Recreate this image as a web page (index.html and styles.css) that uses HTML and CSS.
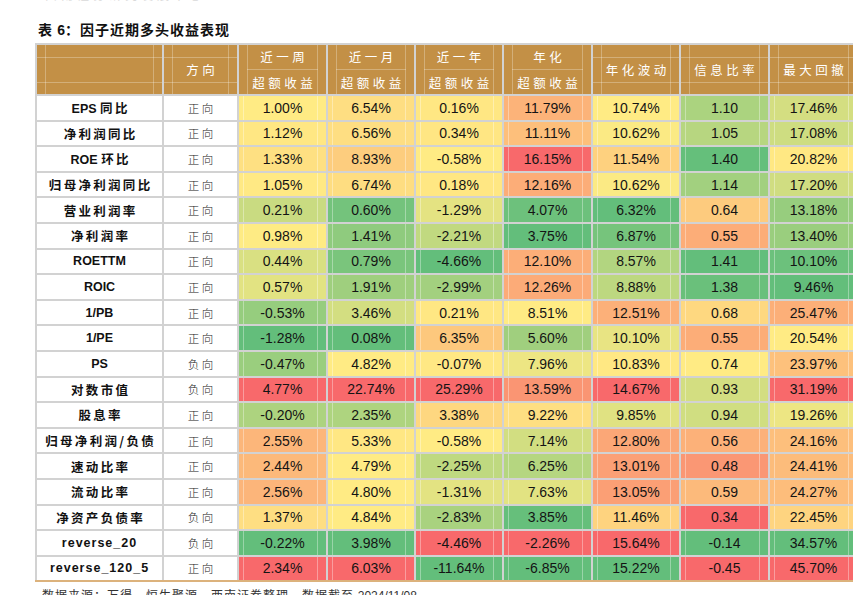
FILE: index.html
```html
<!DOCTYPE html>
<html lang="zh-CN">
<head>
<meta charset="utf-8">
<title>表6 因子近期多头收益表现</title>
<link rel="stylesheet" href="styles.css">
</head>
<body>
<div class="cut-top"><div class="cut-inner">西南证券研究发展中心</div></div>
<h1 class="title">表 <span class="lat">6</span>：因子近期多头收益表现</h1>
<div class="grid" id="grid">
  <div class="hd single blank"></div>
  <div class="hd single"><span>方向</span></div>
  <div class="hd double"><span>近一周</span><span>超额收益</span></div>
  <div class="hd double"><span>近一月</span><span>超额收益</span></div>
  <div class="hd double"><span>近一年</span><span>超额收益</span></div>
  <div class="hd double"><span>年化</span><span>超额收益</span></div>
  <div class="hd single"><span>年化波动</span></div>
  <div class="hd single"><span>信息比率</span></div>
  <div class="hd single"><span>最大回撤</span></div>

  <div class="nm"><span>EPS&nbsp;<span class="cn">同比</span></span></div><div class="dir">正向</div><div class="v">1.00%</div><div class="v">6.54%</div><div class="v">0.16%</div><div class="v">11.79%</div><div class="v">10.74%</div><div class="v">1.10</div><div class="v">17.46%</div>
  <div class="nm"><span class="cn">净利润同比</span></div><div class="dir">正向</div><div class="v">1.12%</div><div class="v">6.56%</div><div class="v">0.34%</div><div class="v">11.11%</div><div class="v">10.62%</div><div class="v">1.05</div><div class="v">17.08%</div>
  <div class="nm"><span>ROE&nbsp;<span class="cn">环比</span></span></div><div class="dir">正向</div><div class="v">1.33%</div><div class="v">8.93%</div><div class="v">-0.58%</div><div class="v">16.15%</div><div class="v">11.54%</div><div class="v">1.40</div><div class="v">20.82%</div>
  <div class="nm"><span class="cn">归母净利润同比</span></div><div class="dir">正向</div><div class="v">1.05%</div><div class="v">6.74%</div><div class="v">0.18%</div><div class="v">12.16%</div><div class="v">10.62%</div><div class="v">1.14</div><div class="v">17.20%</div>
  <div class="nm"><span class="cn">营业利润率</span></div><div class="dir">正向</div><div class="v">0.21%</div><div class="v">0.60%</div><div class="v">-1.29%</div><div class="v">4.07%</div><div class="v">6.32%</div><div class="v">0.64</div><div class="v">13.18%</div>
  <div class="nm"><span class="cn">净利润率</span></div><div class="dir">正向</div><div class="v">0.98%</div><div class="v">1.41%</div><div class="v">-2.21%</div><div class="v">3.75%</div><div class="v">6.87%</div><div class="v">0.55</div><div class="v">13.40%</div>
  <div class="nm">ROETTM</div><div class="dir">正向</div><div class="v">0.44%</div><div class="v">0.79%</div><div class="v">-4.66%</div><div class="v">12.10%</div><div class="v">8.57%</div><div class="v">1.41</div><div class="v">10.10%</div>
  <div class="nm">ROIC</div><div class="dir">正向</div><div class="v">0.57%</div><div class="v">1.91%</div><div class="v">-2.99%</div><div class="v">12.26%</div><div class="v">8.88%</div><div class="v">1.38</div><div class="v">9.46%</div>
  <div class="nm">1/PB</div><div class="dir">正向</div><div class="v">-0.53%</div><div class="v">3.46%</div><div class="v">0.21%</div><div class="v">8.51%</div><div class="v">12.51%</div><div class="v">0.68</div><div class="v">25.47%</div>
  <div class="nm">1/PE</div><div class="dir">正向</div><div class="v">-1.28%</div><div class="v">0.08%</div><div class="v">6.35%</div><div class="v">5.60%</div><div class="v">10.10%</div><div class="v">0.55</div><div class="v">20.54%</div>
  <div class="nm">PS</div><div class="dir">负向</div><div class="v">-0.47%</div><div class="v">4.82%</div><div class="v">-0.07%</div><div class="v">7.96%</div><div class="v">10.83%</div><div class="v">0.74</div><div class="v">23.97%</div>
  <div class="nm"><span class="cn">对数市值</span></div><div class="dir">负向</div><div class="v">4.77%</div><div class="v">22.74%</div><div class="v">25.29%</div><div class="v">13.59%</div><div class="v">14.67%</div><div class="v">0.93</div><div class="v">31.19%</div>
  <div class="nm"><span class="cn">股息率</span></div><div class="dir">正向</div><div class="v">-0.20%</div><div class="v">2.35%</div><div class="v">3.38%</div><div class="v">9.22%</div><div class="v">9.85%</div><div class="v">0.94</div><div class="v">19.26%</div>
  <div class="nm"><span class="cn">归母净利润/负债</span></div><div class="dir">正向</div><div class="v">2.55%</div><div class="v">5.33%</div><div class="v">-0.58%</div><div class="v">7.14%</div><div class="v">12.80%</div><div class="v">0.56</div><div class="v">24.16%</div>
  <div class="nm"><span class="cn">速动比率</span></div><div class="dir">正向</div><div class="v">2.44%</div><div class="v">4.79%</div><div class="v">-2.25%</div><div class="v">6.25%</div><div class="v">13.01%</div><div class="v">0.48</div><div class="v">24.41%</div>
  <div class="nm"><span class="cn">流动比率</span></div><div class="dir">正向</div><div class="v">2.56%</div><div class="v">4.80%</div><div class="v">-1.31%</div><div class="v">7.63%</div><div class="v">13.05%</div><div class="v">0.59</div><div class="v">24.27%</div>
  <div class="nm"><span class="cn">净资产负债率</span></div><div class="dir">负向</div><div class="v">1.37%</div><div class="v">4.84%</div><div class="v">-2.83%</div><div class="v">3.85%</div><div class="v">11.46%</div><div class="v">0.34</div><div class="v">22.45%</div>
  <div class="nm rv">reverse_20</div><div class="dir">负向</div><div class="v g">-0.22%</div><div class="v g">3.98%</div><div class="v r">-4.46%</div><div class="v r">-2.26%</div><div class="v r">15.64%</div><div class="v g">-0.14</div><div class="v g">34.57%</div>
  <div class="nm rv">reverse_120_5</div><div class="dir">正向</div><div class="v r">2.34%</div><div class="v r">6.03%</div><div class="v g">-11.64%</div><div class="v g">-6.85%</div><div class="v g">15.22%</div><div class="v r">-0.45</div><div class="v r">45.70%</div>
</div>
<p class="source">数据来源：万得，恒生聚源，西南证券整理，数据截至 <span class="lat">2024/11/08</span></p>
<script src="script.js"></script>
</body>
</html>
```

FILE: styles.css
```css
html, body {
  margin: 0;
  padding: 0;
  overflow: hidden;
  background: #ffffff;
}

body {
  font-family: "Liberation Sans", "Noto Sans CJK SC", sans-serif;
  color: #111;
}

.cut-top {
  height: 2px;
  overflow: hidden;
  padding-left: 45px;
}

.cut-inner {
  font-family: "Noto Sans CJK SC", sans-serif;
  font-size: 12px;
  line-height: 14px;
  margin-top: -12px;
  color: #dadada;
  letter-spacing: 4px;
  white-space: nowrap;
}

.title {
  margin: 19px 0 0 38px;
  font-family: "Noto Sans CJK SC", sans-serif;
  font-size: 14px;
  line-height: 16px;
  font-weight: 700;
  letter-spacing: 1px;
  color: #111;
}

.lat {
  font-family: "Liberation Sans", sans-serif;
  letter-spacing: 0;
}

.grid {
  margin: 5px 0 0 35px;
  display: grid;
  grid-template-columns: 125px 73px 87px 86px 86px 87px 86px 87px 87px;
  grid-template-rows: 49px;
  grid-auto-rows: 23.6px;
  gap: 2px;
  padding: 2px 2px 0 2px;
  background: #d2d2d2;
  border-bottom: 2px solid #dcb27c;
  width: max-content;
}

.hd {
  position: relative;
  background: #c39046;
  color: #fff;
  font-family: "Noto Sans CJK SC", sans-serif;
  font-size: 12.5px;
  letter-spacing: 3.5px;
  display: flex;
  flex-direction: column;
  align-items: center;
  justify-content: center;
}

.hd::before {
  content: "";
  position: absolute;
  top: 0;
  bottom: 0;
  left: 8px;
  right: 8px;
  border-left: 1px solid rgba(255, 255, 255, 0.28);
  border-right: 1px solid rgba(255, 255, 255, 0.28);
}

.hd.single::after {
  content: "";
  position: absolute;
  left: 0;
  right: 0;
  top: 12px;
  bottom: 11px;
  border-top: 1px solid rgba(255, 255, 255, 0.28);
  border-bottom: 1px solid rgba(255, 255, 255, 0.28);
}

.hd.single span {
  margin-right: -3.5px;
}

.hd.double {
  justify-content: stretch;
}

.hd.double span {
  flex: 1;
  display: flex;
  align-items: center;
  justify-content: center;
  width: 100%;
  padding-left: 3.5px;
  box-sizing: border-box;
}

.hd.double span:first-child {
  padding-bottom: 3px;
}

.hd.double::after {
  content: "";
  position: absolute;
  left: 8px;
  right: 8px;
  top: 24px;
  border-top: 1px solid rgba(255, 255, 255, 0.28);
}

.nm {
  background: #fff;
  font-family: "Liberation Sans", "Noto Sans CJK SC", sans-serif;
  font-weight: 700;
  font-size: 12.5px;
  display: flex;
  align-items: center;
  justify-content: center;
  white-space: nowrap;
  color: #111;
}

.nm .cn {
  font-family: "Noto Sans CJK SC", sans-serif;
  font-weight: 700;
  letter-spacing: 2.3px;
  margin-right: -2.3px;
}

.nm.rv {
  letter-spacing: 1px;
}

.dir {
  background: #fff;
  font-family: "Noto Sans CJK SC", sans-serif;
  font-weight: 300;
  font-size: 11.5px;
  letter-spacing: 2.5px;
  padding-left: 2.5px;
  color: #222;
  display: flex;
  align-items: center;
  justify-content: center;
}

.v {
  background-color: #ffeb84;
  background-image:
    linear-gradient(rgba(255, 255, 255, 0.35), rgba(255, 255, 255, 0.35)),
    linear-gradient(rgba(255, 255, 255, 0.35), rgba(255, 255, 255, 0.35));
  background-size: 1px 100%, 1px 100%;
  background-position: 4px 0, calc(100% - 8px) 0;
  background-repeat: no-repeat;
  font-family: "Liberation Sans", sans-serif;
  font-size: 14px;
  color: #141414;
  display: flex;
  align-items: center;
  justify-content: center;
}

.v.g { background-color: #63be7b; }
.v.r { background-color: #f8696b; }

.source {
  margin: 6px 0 0 42px;
  font-family: "Noto Sans CJK SC", sans-serif;
  font-size: 12px;
  line-height: 14px;
  letter-spacing: 1px;
  color: #333;
}
```

FILE: script.js
```js
(function () {
  var grid = document.getElementById('grid');
  var cells = Array.prototype.slice.call(grid.querySelectorAll('.v'));
  var cols = 7;
  var GREEN = [99, 190, 123], YEL = [255, 235, 132], RED = [248, 105, 107];
  // direction: 1 => high is red, -1 => high is green
  var dirs = [1, 1, 1, 1, 1, -1, 1];
  function mix(a, b, t) {
    return 'rgb(' + [0, 1, 2].map(function (i) {
      return Math.round(a[i] + (b[i] - a[i]) * t);
    }).join(',') + ')';
  }
  for (var c = 0; c < cols; c++) {
    var list = [];
    for (var i = c; i < cells.length; i += cols) {
      var el = cells[i];
      if (el.classList.contains('g') || el.classList.contains('r')) continue;
      list.push({ el: el, v: parseFloat(el.textContent) });
    }
    var vals = list.map(function (o) { return o.v; }).sort(function (a, b) { return a - b; });
    var min = vals[0], max = vals[vals.length - 1];
    var mid = vals[Math.floor(vals.length / 2)];
    var hi = dirs[c] === 1 ? RED : GREEN;
    var lo = dirs[c] === 1 ? GREEN : RED;
    list.forEach(function (o) {
      var col;
      if (o.v >= mid) col = mix(YEL, hi, max === mid ? 0 : (o.v - mid) / (max - mid));
      else col = mix(YEL, lo, (mid - o.v) / (mid - min));
      o.el.style.backgroundColor = col;
    });
  }
})();
```
